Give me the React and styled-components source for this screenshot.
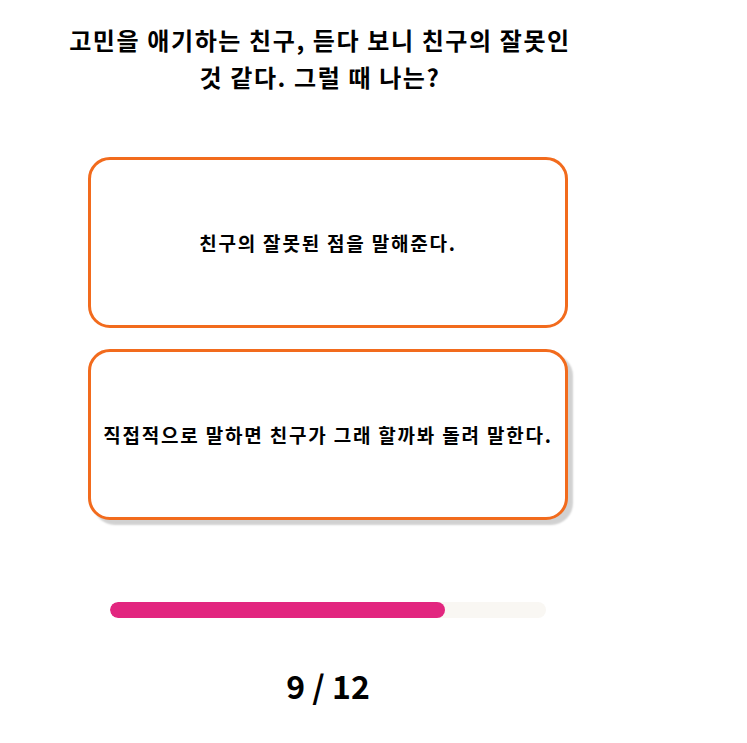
import React from "react";
import styled, { createGlobalStyle } from "styled-components";

const question = "고민을 애기하는 친구, 듣다 보니 친구의 잘못인 것 같다. 그럴 때 나는?";
const answers = [
  "친구의 잘못된 점을 말해준다.",
  "직접적으로 말하면 친구가 그래 할까봐 돌려 말한다."
];
const current = 9;
const total = 12;

const GlobalStyle = createGlobalStyle`
  body {
    margin: 8px;
    background: #ffffff;
    font-family: "Noto Sans CJK KR", "Noto Sans", sans-serif;
    color: #000000;
  }
`;

const Page = styled.div`
  width: 640px;
  display: flex;
  flex-direction: column;
`;

const Title = styled.h2`
  margin: 13px 0 0;
  padding: 0 72px 0 56px;
  font-size: 24px;
  line-height: 37px;
  font-weight: 700;
  letter-spacing: 1.6px;
  text-align: center;
`;

const Options = styled.div`
  margin-top: 62px;
  display: flex;
  flex-direction: column;
  align-items: center;
  gap: 21px;
`;

const Option = styled.button`
  box-sizing: border-box;
  width: 480px;
  height: 171px;
  padding: 0 8px;
  display: flex;
  align-items: center;
  justify-content: center;
  background: #ffffff;
  border: 3px solid #f26b1d;
  border-radius: 22px;
  font-family: inherit;
  font-size: 19px;
  font-weight: 700;
  letter-spacing: 1.8px;
  color: #000000;
  cursor: pointer;
  box-shadow: ${(p) => (p.$active ? "5px 5px 2px rgba(0, 0, 0, 0.18)" : "none")};
`;

const Track = styled.div`
  width: 68%;
  height: 16px;
  margin: 82px auto 0;
  border-radius: 8px;
  background: #f9f7f3;
  overflow: hidden;
`;

const Fill = styled.div`
  height: 100%;
  border-radius: 8px;
  background: #e2267f;
`;

const Counter = styled.div`
  margin-top: 45px;
  text-align: center;
  font-size: 32px;
  line-height: 44px;
  font-weight: 700;
`;

export default function App() {
  // bar runs a little ahead of the plain ratio
  const pct = (current / total) * 100 + 1.8;

  return (
    <>
      <GlobalStyle />
      <Page>
        <Title>{question}</Title>
        <Options>
          {answers.map((a, i) => (
            <Option key={a} $active={i === 1}>
              {a}
            </Option>
          ))}
        </Options>
        <Track>
          <Fill style={{ width: `${pct}%` }} />
        </Track>
        <Counter>
          {current} / {total}
        </Counter>
      </Page>
    </>
  );
}
